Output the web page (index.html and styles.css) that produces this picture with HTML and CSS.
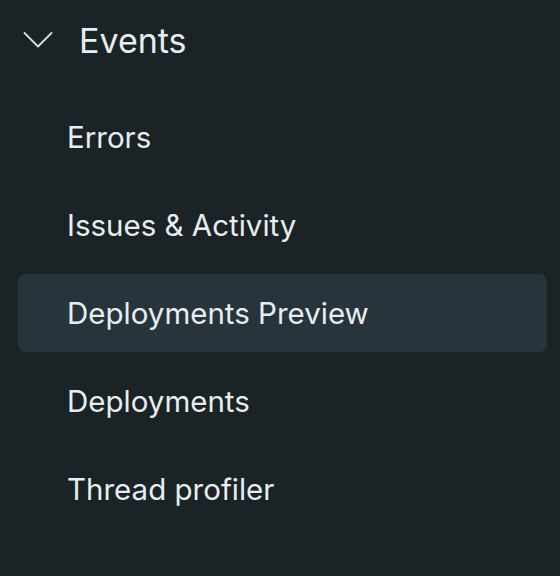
FILE: index.html
```html
<!DOCTYPE html>
<html>
<head>
<meta charset="utf-8">
<link rel="stylesheet" href="styles.css">
</head>
<body>
<nav class="sidebar">
  <div class="section-header">
    <svg class="chevron" width="30" height="18" viewBox="0 0 30 18" aria-hidden="true">
      <path d="M1.5 2 L15 15.5 L28.5 2" fill="none" stroke="#d9dee0" stroke-width="1.8" stroke-linecap="round" stroke-linejoin="round"/>
    </svg>
    <span class="section-title">Events</span>
  </div>
  <ul class="nav-list">
    <li class="nav-item">Errors</li>
    <li class="nav-item">Issues &amp; Activity</li>
    <li class="nav-item active">Deployments Preview</li>
    <li class="nav-item">Deployments</li>
    <li class="nav-item">Thread profiler</li>
  </ul>
</nav>
</body>
</html>
```
FILE: styles.css
```css
html, body {
  margin: 0;
  padding: 0;
  background: #1a2326;
  height: 100%;
}
body {
  font-family: Inter, "Noto Sans", sans-serif;
  color: #e9edef;
  -webkit-font-smoothing: antialiased;
}
.sidebar {
  display: flex;
  flex-direction: column;
  padding: 0 13px 0 18px;
}
.section-header {
  display: flex;
  align-items: center;
  height: 80px;
  gap: 26px;
  padding-left: 5px;
}
.chevron {
  flex: none;
}
.section-title {
  font-size: 34px;
  font-weight: 400;
}
.nav-list {
  list-style: none;
  margin: 18px 0 0;
  padding: 0;
  display: flex;
  flex-direction: column;
  gap: 10px;
}
.nav-item {
  height: 78px;
  display: flex;
  align-items: center;
  padding-left: 49px;
  font-size: 29.5px;
  font-weight: 400;
  border-radius: 8px;
}
.nav-item.active {
  background: #27343b;
}
```
